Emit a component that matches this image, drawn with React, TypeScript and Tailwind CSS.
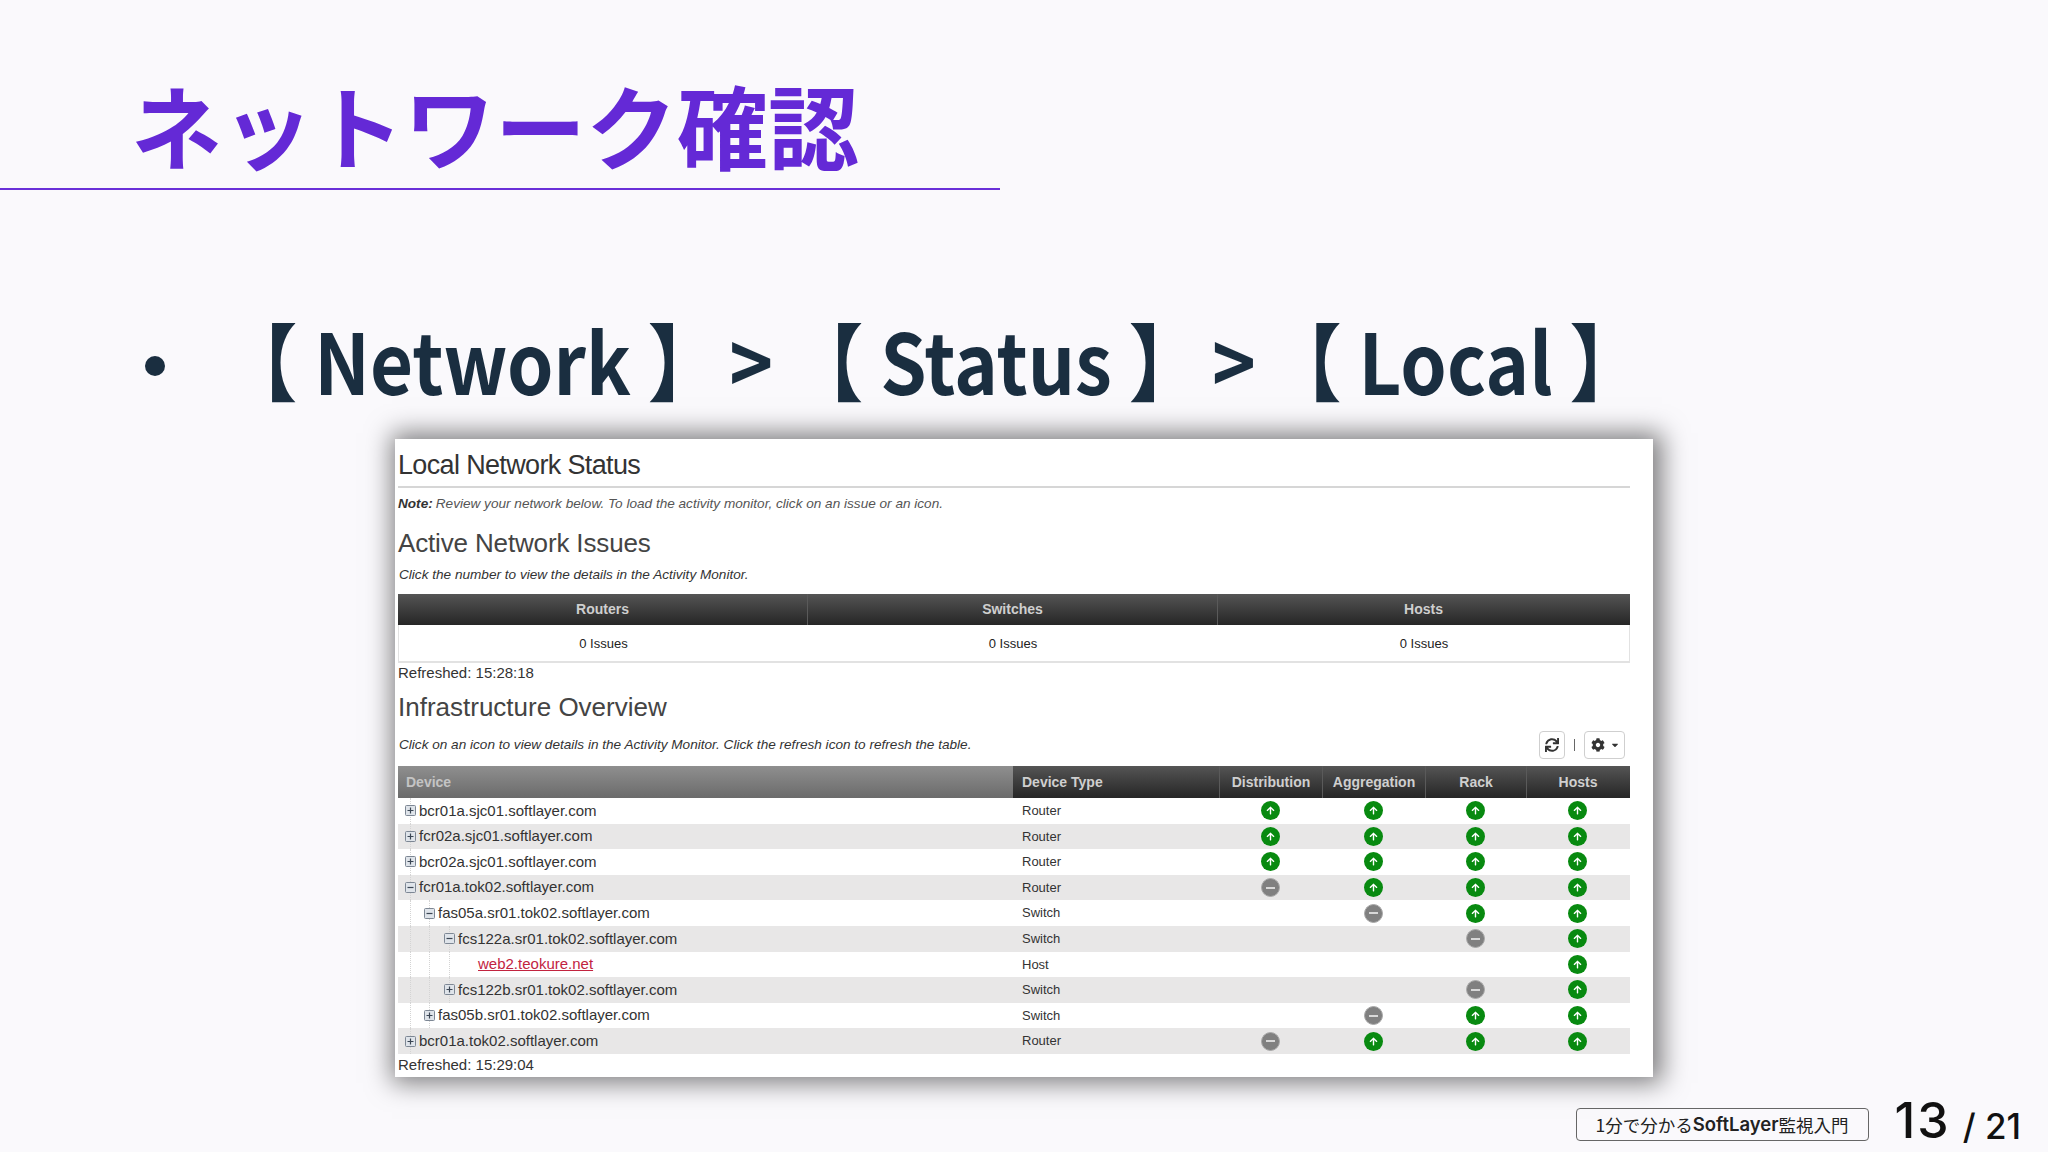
import { FaCog, FaSync, FaCaretDown, FaArrowUp } from "react-icons/fa";

const arial = "font-['Liberation_Sans',Arial,sans-serif]";

type Status = "up" | "off" | null;
type Row = {
  name: string;
  type: string;
  box: "plus" | "minus" | null;
  indent: string;
  guides: string[];
  link?: boolean;
  cells: Status[];
};

const rows: Row[] = [
  { name: "bcr01a.sjc01.softlayer.com", type: "Router", box: "plus", indent: "pl-[7px]", guides: ["left-[12px]"], cells: ["up", "up", "up", "up"] },
  { name: "fcr02a.sjc01.softlayer.com", type: "Router", box: "plus", indent: "pl-[7px]", guides: ["left-[12px]"], cells: ["up", "up", "up", "up"] },
  { name: "bcr02a.sjc01.softlayer.com", type: "Router", box: "plus", indent: "pl-[7px]", guides: ["left-[12px]"], cells: ["up", "up", "up", "up"] },
  { name: "fcr01a.tok02.softlayer.com", type: "Router", box: "minus", indent: "pl-[7px]", guides: ["left-[12px]"], cells: ["off", "up", "up", "up"] },
  { name: "fas05a.sr01.tok02.softlayer.com", type: "Switch", box: "minus", indent: "pl-[26px]", guides: ["left-[12px]", "left-[31px]"], cells: [null, "off", "up", "up"] },
  { name: "fcs122a.sr01.tok02.softlayer.com", type: "Switch", box: "minus", indent: "pl-[46px]", guides: ["left-[12px]", "left-[31px]", "left-[51px]"], cells: [null, null, "off", "up"] },
  { name: "web2.teokure.net", type: "Host", box: null, indent: "pl-[80px]", guides: ["left-[12px]", "left-[31px]", "left-[51px]"], link: true, cells: [null, null, null, "up"] },
  { name: "fcs122b.sr01.tok02.softlayer.com", type: "Switch", box: "plus", indent: "pl-[46px]", guides: ["left-[12px]", "left-[31px]", "left-[51px]"], cells: [null, null, "off", "up"] },
  { name: "fas05b.sr01.tok02.softlayer.com", type: "Switch", box: "plus", indent: "pl-[26px]", guides: ["left-[12px]", "left-[31px]"], cells: [null, "off", "up", "up"] },
  { name: "bcr01a.tok02.softlayer.com", type: "Router", box: "plus", indent: "pl-[7px]", guides: ["left-[12px]"], cells: ["off", "up", "up", "up"] },
];

function StatusIcon({ s }: { s: Status }) {
  if (s === "up")
    return (
      <span className="flex h-[19px] w-[19px] items-center justify-center rounded-full bg-[#088a10] text-white">
        <FaArrowUp className="h-[9px] w-[9px]" />
      </span>
    );
  if (s === "off")
    return (
      <span className="flex h-[19px] w-[19px] items-center justify-center rounded-full border border-[#a9a9a9] bg-[#808080]">
        <span className="h-[2px] w-[9px] bg-[#d8d8d8]" />
      </span>
    );
  return null;
}

function TreeBox({ kind }: { kind: "plus" | "minus" }) {
  return (
    <svg viewBox="0 0 11 11" className="relative h-[11px] w-[11px] shrink-0">
      <rect x="0.5" y="0.5" width="10" height="10" rx="1" fill="#dfe4ea" stroke="#7d8794" />
      <path d={kind === "plus" ? "M2.5 5.5h6M5.5 2.5v6" : "M2.5 5.5h6"} stroke="#3b4654" strokeWidth="1.2" />
    </svg>
  );
}

function HeadCell({ children, first }: { children: React.ReactNode; first?: boolean }) {
  return (
    <div className={`flex h-full items-center justify-center text-[14px] font-bold text-[#cfcfcf] ${first ? "" : "border-l border-[#5a5a5a]"}`}>
      {children}
    </div>
  );
}

const gridCols = "grid grid-cols-[615px_206px_103px_103px_101px_103px]";

export default function App() {
  return (
    <div className="flex h-[1152px] w-[2048px] flex-col overflow-hidden bg-[#faf9fc]">
      <div className="h-[190px] w-[1000px] border-b-2 border-[#6a2fd8] pl-[131px] pt-[73px]">
        <h1 className="font-['Noto_Sans_CJK_JP',sans-serif] text-[91px] leading-[100px] font-bold text-[#6429d6]">
          ネットワーク確認
        </h1>
      </div>

      <div className="mt-[120px] flex h-[112px] items-center pl-[145px] font-['Noto_Sans_CJK_JP',sans-serif] text-[#1a2e40]">
        <span className="h-[20px] w-[20px] shrink-0 rounded-full bg-[#1a2e40]" />
        <div className="mb-[14px] ml-[58px] flex origin-left scale-x-[0.885] whitespace-pre text-[84px] leading-[112px] font-bold">
          <span>【 Network 】</span>
          <span className="ml-[8px]">&gt;</span>
          <span className="ml-[18px]">【 Status 】</span>
          <span className="ml-[10px]">&gt;</span>
          <span className="ml-[13px]">【 Local 】</span>
        </div>
      </div>

      <section className={`ml-[395px] mt-[17px] h-[638px] w-[1258px] bg-white pl-[3px] pr-[23px] shadow-[3px_0_24px_6px_rgba(0,0,0,0.5)] ${arial}`}>
        <h2 className="flex h-[49px] items-center border-b-2 border-[#d6d6d6] pt-[6px] text-[27px] tracking-[-0.65px] text-[#333333]">Local Network Status</h2>
        <p className="flex h-[32px] items-center text-[13.6px] italic text-[#555555]">
          <b className="mr-[3px] text-[#333333]">Note:</b> Review your network below. To load the activity monitor, click on an issue or an icon.
        </p>
        <h2 className="flex h-[47px] items-center text-[26px] tracking-[-0.15px] text-[#444444]">Active Network Issues</h2>
        <p className="flex h-[16px] items-center pl-[1px] text-[13.6px] italic text-[#333333]">Click the number to view the details in the Activity Monitor.</p>

        <div className="mt-[11px]">
          <div className="grid h-[31px] grid-cols-[409px_410px_412px] bg-gradient-to-b from-[#555555] to-[#262626]">
            <HeadCell first>Routers</HeadCell>
            <HeadCell>Switches</HeadCell>
            <HeadCell>Hosts</HeadCell>
          </div>
          <div className="grid h-[38px] grid-cols-[409px_410px_412px] items-center border-x border-b-2 border-[#e2e2e2] pt-[2px] text-center text-[13px] text-[#222222]">
            <span>0 Issues</span>
            <span>0 Issues</span>
            <span>0 Issues</span>
          </div>
        </div>

        <p className="flex h-[20px] items-center text-[15px] text-[#333333]">Refreshed: 15:28:18</p>
        <h2 className="flex h-[48px] items-center text-[26px] text-[#444444]">Infrastructure Overview</h2>

        <div className="flex h-[28px] items-center pl-[1px] pr-[5px] text-[13.6px] italic text-[#333333]">
          <span>Click on an icon to view details in the Activity Monitor. Click the refresh icon to refresh the table.</span>
          <div className="ml-auto flex items-center">
            <span className="flex h-[28px] w-[26px] items-center justify-center rounded-[4px] border border-[#cfcfcf] text-[#333333]">
              <FaSync className="h-[14px] w-[14px]" />
            </span>
            <span className="mx-[9px] h-[12px] w-px bg-[#666666]" />
            <span className="flex h-[28px] w-[41px] items-center justify-center gap-[6px] rounded-[4px] border border-[#cfcfcf] text-[#333333]">
              <FaCog className="h-[14px] w-[14px]" />
              <FaCaretDown className="h-[10px] w-[8px]" />
            </span>
          </div>
        </div>

        <div className={`mt-[7px] h-[32px] ${gridCols} bg-gradient-to-b from-[#555555] to-[#262626] text-[14px] font-bold text-[#cfcfcf]`}>
          <div className="flex items-center bg-gradient-to-b from-[#8f8f8f] to-[#6b6b6b] pl-[8px] text-[#c4c4c4]">Device</div>
          <div className="flex items-center pl-[9px]">Device Type</div>
          <HeadCell>Distribution</HeadCell>
          <HeadCell>Aggregation</HeadCell>
          <HeadCell>Rack</HeadCell>
          <HeadCell>Hosts</HeadCell>
        </div>

        {rows.map((r, i) => (
          <div key={r.name} className={`${gridCols} h-[25.6px] items-center ${i % 2 ? "bg-[#e8e7e7]" : "bg-white"}`}>
            <div className={`relative flex h-full items-center gap-[3px] ${r.indent} text-[15px] text-[#333333]`}>
              {r.guides.map((g) => (
                <span key={g} className={`absolute top-0 bottom-0 border-l border-dotted border-[#d4d4d4] ${g}`} />
              ))}
              {r.box && <TreeBox kind={r.box} />}
              {r.link ? (
                <span className="text-[#c2233f] underline">{r.name}</span>
              ) : (
                <span>{r.name}</span>
              )}
            </div>
            <div className="pl-[9px] text-[13px] text-[#333333]">{r.type}</div>
            {r.cells.map((s, j) => (
              <div key={j} className="flex justify-center">
                <StatusIcon s={s} />
              </div>
            ))}
          </div>
        ))}

        <p className="flex h-[22px] items-center text-[15px] text-[#333333]">Refreshed: 15:29:04</p>
      </section>

      <footer className="mt-[22px] flex h-[50px] items-center justify-end pr-[27px]">
        <div className="flex h-[33px] w-[293px] items-center justify-center rounded-[4px] border border-[#666666] pt-[2px] font-['Noto_Sans_CJK_JP',sans-serif] text-[17.5px] text-[#222222]">
          1分で分かる<span className="font-['Inter',sans-serif] text-[18.5px] font-semibold">SoftLayer</span>監視入門
        </div>
        <span className="mb-[8px] ml-[26px] font-['Inter',sans-serif] text-[50px] leading-[50px] font-medium tracking-[2px] text-[#111111]">13</span>
        <span className="ml-[12px] mt-[4px] font-['Inter',sans-serif] text-[35px] leading-[40px] font-medium text-[#111111]">/ 21</span>
      </footer>
    </div>
  );
}
